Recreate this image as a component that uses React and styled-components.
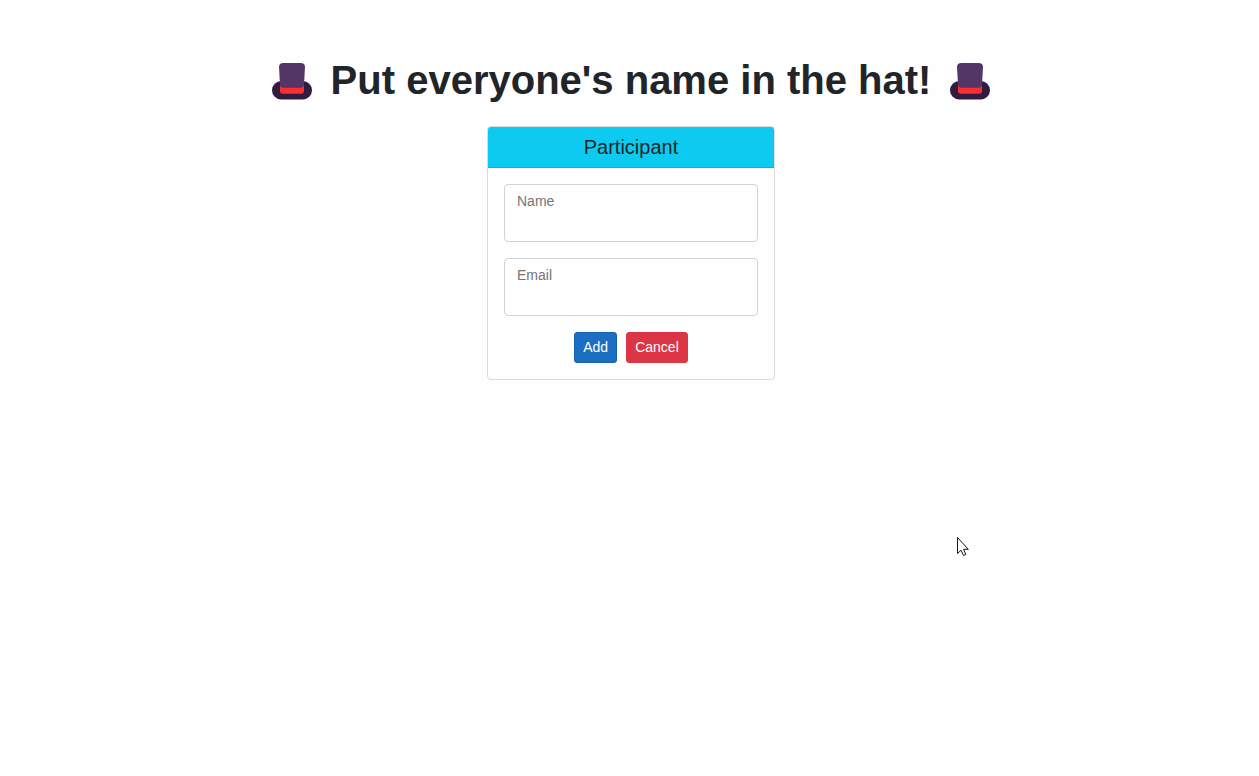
import React from "react";
import styled, { createGlobalStyle } from "styled-components";

const GlobalStyle = createGlobalStyle`
  *, *::before, *::after { box-sizing: border-box; }
  body {
    margin: 0;
    background: #fefefe;
    color: #212529;
    font-family: "Liberation Sans", Arial, sans-serif;
    font-size: 16px;
    line-height: 24px;
  }
`;

const Page = styled.main`
  position: relative;
  display: flex;
  flex-direction: column;
  align-items: center;
  gap: 22px;
  min-height: 100vh;
  padding: 56px 0 24px 3px;
`;

const Title = styled.h1`
  display: flex;
  align-items: center;
  justify-content: center;
  gap: 19px;
  margin: 0;
  font-size: 40px;
  font-weight: 700;
  line-height: 48px;
`;

const HatIcon = styled.svg`
  flex: none;
  width: 40px;
  height: 40px;
`;

const Card = styled.section`
  width: 288px;
  max-width: 100%;
  border: 1px solid #dcdcde;
  border-radius: 4px;
  overflow: hidden;
`;

const CardHeader = styled.h2`
  margin: 0;
  padding: 8px 16px;
  border-bottom: 1px solid #0cb1d3;
  background: #0dcaf0;
  font-size: 20px;
  font-weight: 400;
  line-height: 24px;
  text-align: center;
`;

const Form = styled.form`
  display: flex;
  flex-direction: column;
  gap: 16px;
  padding: 16px;
`;

const Field = styled.input`
  display: block;
  width: 100%;
  height: 58px;
  padding: 6px 12px 30px;
  border: 1px solid #ced4da;
  border-radius: 4px;
  background: #fefefe;
  color: inherit;
  font: inherit;
  font-size: 14px;
  line-height: 20px;

  &::placeholder {
    color: #757575;
    opacity: 1;
  }
`;

const Actions = styled.div`
  display: flex;
  justify-content: center;
  gap: 9px;
`;

const variants = {
  primary: { background: "#1b6ec2", border: "#1861ac" },
  danger: { background: "#dc3545", border: "#dc3545" },
};

const Button = styled.button`
  padding: 4px 8px;
  border: 1px solid ${({ $variant }) => variants[$variant].border};
  border-radius: 3px;
  background: ${({ $variant }) => variants[$variant].background};
  color: #fff;
  font: inherit;
  font-size: 14px;
  line-height: 21px;
  cursor: pointer;
`;

const Pointer = styled.svg`
  position: absolute;
  top: 536px;
  left: calc(50% + 326px);
  width: 13px;
  height: 20px;
  pointer-events: none;
`;

function Hat() {
  return (
    <HatIcon viewBox="0 0 40 40" aria-hidden="true">
      <rect x="0" y="21" width="40" height="18.5" rx="9.25" fill="#321b41" />
      <path d="M8 24H32V31Q32 33.7 29 33.7H11Q8 33.7 8 31Z" fill="#f92f30" />
      <path
        d="M7 7Q7 3 11.5 3H28.5Q33 3 33 7L32 24.5Q32 27.8 28 27.8H12Q8 27.8 8 24.5Z"
        fill="#533566"
      />
    </HatIcon>
  );
}

export default function App() {
  return (
    <>
      <GlobalStyle />
      <Page>
        <Title>
          <Hat />
          <span>Put everyone's name in the hat!</span>
          <Hat />
        </Title>
        <Card aria-labelledby="participant-title">
          <CardHeader id="participant-title">Participant</CardHeader>
          <Form onSubmit={(event) => event.preventDefault()}>
            <Field type="text" name="name" placeholder="Name" aria-label="Name" />
            <Field type="email" name="email" placeholder="Email" aria-label="Email" />
            <Actions>
              <Button type="submit" $variant="primary">Add</Button>
              <Button type="reset" $variant="danger">Cancel</Button>
            </Actions>
          </Form>
        </Card>
        <Pointer viewBox="0 0 13 20" aria-hidden="true">
          <path
            d="M1.5 1.5V17.5L5 14.2L7.5 19.5L9.8 18.5L7.6 13.3H12.3Z"
            fill="#fff"
            stroke="#11111f"
            strokeWidth="1"
          />
        </Pointer>
      </Page>
    </>
  );
}
